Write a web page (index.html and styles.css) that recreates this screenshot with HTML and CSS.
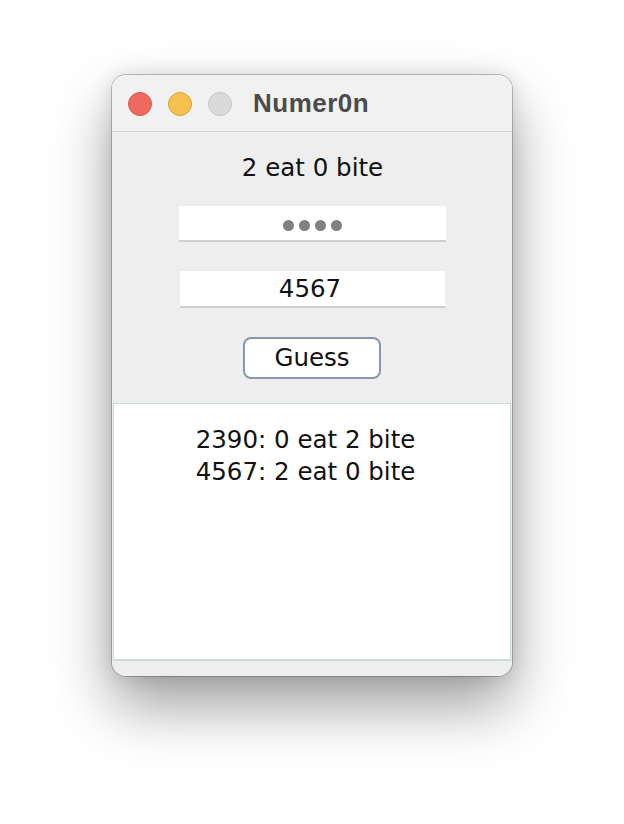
FILE: index.html
```html
<!DOCTYPE html>
<html>
<head>
<meta charset="utf-8">
<link rel="stylesheet" href="styles.css">
</head>
<body>
<div class="stage">
  <div class="window">
    <div class="titlebar">
      <div class="lights">
        <span class="light red"></span>
        <span class="light yellow"></span>
        <span class="light gray"></span>
      </div>
      <div class="title">Numer0n</div>
    </div>
    <div class="content">
      <div class="status">2 eat 0 bite</div>
      <div class="field password"><span class="dot"></span><span class="dot"></span><span class="dot"></span><span class="dot"></span></div>
      <div class="field text">4567</div>
      <button class="guess">Guess</button>
    </div>
    <div class="log">
      <div>2390: 0 eat 2 bite</div>
      <div>4567: 2 eat 0 bite</div>
    </div>
    <div class="footer"></div>
  </div>
</div>
</body>
</html>
```
FILE: styles.css
```css
html, body { margin: 0; padding: 0; background: #ffffff; }
.stage { padding: 75px 0 0 112px; height: 824px; box-sizing: border-box; }
.window {
  width: 400px;
  height: 601px;
  border-radius: 14px;
  background: #eeeeee;
  overflow: hidden;
  box-shadow: 0 0 0 1px rgba(0,0,0,0.22), 0 30px 60px rgba(0,0,0,0.38), 0 0 20px rgba(0,0,0,0.12);
  display: flex;
  flex-direction: column;
  font-family: "DejaVu Sans", Verdana, sans-serif;
}
.titlebar {
  height: 56px;
  flex: none;
  background: #f1f1f1;
  border-bottom: 1px solid #d2d2d2;
  display: flex;
  align-items: center;
  padding-left: 16px;
}
.lights { display: flex; gap: 16px; margin-top: 1px; }
.light { width: 24px; height: 24px; border-radius: 50%; box-sizing: border-box; }
.red { background: #ee6a5f; border: 1px solid #d5564c; }
.yellow { background: #f5c14f; border: 1px solid #d8a23a; }
.gray { background: #dadada; border: 1px solid #c6c6c6; }
.title {
  margin-left: 21px;
  font-family: "Liberation Sans", Arial, sans-serif;
  font-weight: bold;
  font-size: 26px;
  letter-spacing: 0.5px;
  color: #4b4b4b;
}
.content {
  flex: none;
  display: flex;
  flex-direction: column;
  align-items: center;
  padding-top: 21px;
  height: 271px;
  box-sizing: border-box;
}
.status { font-size: 24.5px; color: #111; line-height: 30px; margin-left: 1px; }
.field {
  background: #ffffff;
  border-bottom: 2px solid #cfcfcf;
  box-sizing: border-box;
  display: flex;
  align-items: center;
  justify-content: center;
}
.password { width: 267px; height: 36px; margin-top: 23px; gap: 5px; padding-top: 4px; }
.dot { width: 11px; height: 11px; border-radius: 50%; background: #808080; }
.text { width: 265px; height: 37px; margin-top: 29px; font-size: 24.5px; color: #111; padding-right: 4px; }
.guess {
  margin-top: 29px;
  width: 138px;
  height: 42px;
  border: 2px solid #8a97aa;
  border-radius: 8px;
  background: #ffffff;
  font-family: "DejaVu Sans", Verdana, sans-serif;
  font-size: 24.5px;
  color: #111;
  padding: 0 0 2px 0;
}
.log {
  flex: none;
  height: 258px;
  margin: 0 1px;
  background: #ffffff;
  border: 1px solid #c8ddd6;
  border-bottom-width: 2px;
  box-sizing: border-box;
  display: flex;
  flex-direction: column;
  align-items: center;
  padding: 20px 13px 0 0;
  font-size: 24.5px;
  line-height: 32px;
  color: #111;
}
.footer { flex: 1; background: #eeeeee; }
```
